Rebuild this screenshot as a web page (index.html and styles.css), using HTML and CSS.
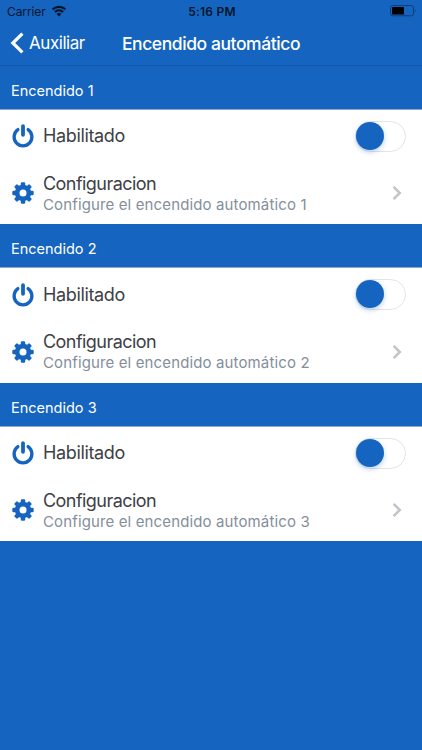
FILE: index.html
```html
<!DOCTYPE html>
<html lang="es">
<head>
    <meta charset="UTF-8">
    <meta name="viewport" content="width=device-width, initial-scale=1.0">
    <title>Encendido automático</title>
    <link rel="stylesheet" href="styles.css">
</head>
<body>
    <svg class="symbols" width="0" height="0">
        <symbol id="power" viewBox="0 0 24 24">
            <path d="M6.9 5.6A8.9 8.9 0 1 0 17.1 5.6" fill="none" stroke="#1565c0" stroke-width="3.3" stroke-linecap="round"/>
            <path d="M12 2.2V10.8" stroke="#1565c0" stroke-width="3.8" stroke-linecap="round"/>
        </symbol>
        <symbol id="gear" viewBox="0 0 24 24">
            <g fill="#1565c0">
                <rect x="9.8" y="1.3" width="4.4" height="21.4" rx="1.2"/>
                <rect x="9.8" y="1.3" width="4.4" height="21.4" rx="1.2" transform="rotate(45 12 12)"/>
                <rect x="9.8" y="1.3" width="4.4" height="21.4" rx="1.2" transform="rotate(90 12 12)"/>
                <rect x="9.8" y="1.3" width="4.4" height="21.4" rx="1.2" transform="rotate(135 12 12)"/>
                <circle cx="12" cy="12" r="8.2"/>
            </g>
            <circle cx="12" cy="12" r="3.5" fill="#fff"/>
        </symbol>
        <symbol id="chevron" viewBox="0 0 10 16">
            <path d="M1.6 1.8L7.8 8L1.6 14.2" fill="none" stroke="#c2c4ca" stroke-width="2.5"/>
        </symbol>
    </svg>

    <div class="status-bar">
        <div class="carrier">
            <span>Carrier</span>
            <svg width="16" height="12" viewBox="0 0 16 12">
                <g fill="none" stroke="#07152b" stroke-width="2.3">
                    <path d="M1.6 4.3A9.4 9.4 0 0 1 14.4 4.3"/>
                    <path d="M3.9 7A6 6 0 0 1 12.1 7"/>
                </g>
                <path d="M5.6 8.9A3.4 3.4 0 0 1 10.4 8.9L8 11.4Z" fill="#07152b"/>
            </svg>
        </div>
        <span class="time">5:16 PM</span>
        <svg class="battery" width="28" height="12" viewBox="0 0 28 12">
            <rect x="1.5" y=".6" width="23" height="10.2" rx="2" fill="none" stroke="#0d3d75" stroke-width="1"/>
            <rect x="3" y="2" width="12" height="7.4" rx=".5" fill="#000"/>
            <path d="M25.9 4Q27.5 5.7 25.9 7.4Z" fill="#0d3d75"/>
        </svg>
    </div>

    <div class="navbar">
        <div class="back">
            <svg width="14" height="22" viewBox="0 0 14 22">
                <path d="M12.4 1.6L2.8 11L12.4 20.4" fill="none" stroke="#fff" stroke-width="3.2"/>
            </svg>
            <span>Auxiliar</span>
        </div>
        <h1 class="title">Encendido automático</h1>
    </div>

    <div class="section">
        <div class="section-header">Encendido 1</div>
        <div class="row">
            <svg class="icon"><use href="#power"/></svg>
            <span class="label">Habilitado</span>
            <div class="toggle"><div class="knob"></div></div>
        </div>
        <div class="row row-config">
            <svg class="icon"><use href="#gear"/></svg>
            <div class="text">
                <span class="label config">Configuracion</span>
                <span class="detail">Configure el encendido automático 1</span>
            </div>
            <svg class="chevron"><use href="#chevron"/></svg>
        </div>
    </div>

    <div class="section">
        <div class="section-header">Encendido 2</div>
        <div class="row">
            <svg class="icon"><use href="#power"/></svg>
            <span class="label">Habilitado</span>
            <div class="toggle"><div class="knob"></div></div>
        </div>
        <div class="row row-config">
            <svg class="icon"><use href="#gear"/></svg>
            <div class="text">
                <span class="label config">Configuracion</span>
                <span class="detail">Configure el encendido automático 2</span>
            </div>
            <svg class="chevron"><use href="#chevron"/></svg>
        </div>
    </div>

    <div class="section">
        <div class="section-header">Encendido 3</div>
        <div class="row">
            <svg class="icon"><use href="#power"/></svg>
            <span class="label">Habilitado</span>
            <div class="toggle"><div class="knob"></div></div>
        </div>
        <div class="row row-config">
            <svg class="icon"><use href="#gear"/></svg>
            <div class="text">
                <span class="label config">Configuracion</span>
                <span class="detail">Configure el encendido automático 3</span>
            </div>
            <svg class="chevron"><use href="#chevron"/></svg>
        </div>
    </div>
</body>
</html>
```

FILE: styles.css
```css
* {
    box-sizing: border-box;
}

body {
    margin: 0;
    min-height: 100vh;
    background: #1565c0;
    font-family: Inter, "Liberation Sans", sans-serif;
    color: #3e4045;
}

.symbols {
    display: none;
}

.status-bar {
    display: grid;
    grid-template-columns: 1fr auto 1fr;
    align-items: center;
    height: 22px;
    padding: 0 5px 0 7px;
    font-size: 12px;
    color: #07152b;
}

.carrier {
    display: flex;
    align-items: center;
    gap: 5px;
    letter-spacing: -0.1px;
}

.time {
    font-weight: 600;
    letter-spacing: 0.2px;
}

.battery {
    justify-self: end;
}

.navbar {
    display: grid;
    grid-template-columns: 1fr auto 1fr;
    align-items: center;
    height: 43.5px;
    padding: 0 10px;
    border-bottom: 1px solid #1259ab;
    color: #fff;
}

.back {
    display: flex;
    align-items: center;
    gap: 5px;
    font-size: 17px;
    letter-spacing: -0.45px;
    white-space: nowrap;
}

.title {
    margin: 0;
    font-size: 17.5px;
    font-weight: 500;
    letter-spacing: -0.42px;
}

.section-header {
    display: flex;
    align-items: center;
    height: 44px;
    padding: 6px 11px 0;
    border-bottom: 1px solid #8fa9cc;
    font-size: 14.5px;
    color: #fff;
}

.row {
    display: flex;
    align-items: center;
    height: 52.5px;
    padding: 1px 16px 0 10.5px;
    background: #fff;
}

.row-config {
    height: 62px;
    padding: 0 20px 0 10.5px;
}

.icon {
    flex: none;
    width: 24px;
    height: 24px;
    margin-right: 8.5px;
}

.label {
    font-size: 18px;
    line-height: 22px;
    letter-spacing: -0.35px;
}

.config {
    letter-spacing: -0.55px;
}

.text {
    display: flex;
    flex-direction: column;
    padding-top: 1px;
}

.detail {
    font-size: 15px;
    line-height: 20px;
    letter-spacing: 0.13px;
    color: #848f9b;
}

.toggle {
    width: 51px;
    height: 31px;
    margin-left: auto;
    border: 1.5px solid #e4e4e6;
    border-radius: 16px;
}

.knob {
    width: 28px;
    height: 28px;
    border-radius: 50%;
    background: #1565c0;
    box-shadow: 0 2px 5px rgba(21, 101, 192, 0.3);
}

.chevron {
    width: 10px;
    height: 16px;
    margin-left: auto;
}
```
